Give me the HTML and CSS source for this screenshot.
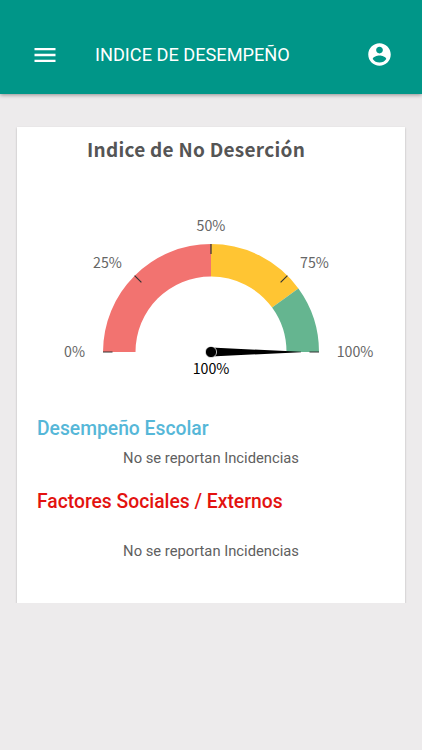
FILE: index.html
```
<!DOCTYPE html>
<html lang="es">
<head>
    <meta charset="UTF-8">
    <meta name="viewport" content="width=device-width, initial-scale=1.0">
    <title>Indice de Desempeño</title>
    <link rel="stylesheet" href="styles.css">
</head>
<body>

<header class="toolbar">
    <svg class="menu-icon" viewBox="0 0 24 24">
        <path d="M3 18h18v-2H3v2zm0-5h18v-2H3v2zm0-7v2h18V6H3z"/>
    </svg>
    <h1>INDICE DE DESEMPEÑO</h1>
    <svg class="user-icon" viewBox="0 0 24 24">
        <path d="M12 2C6.48 2 2 6.48 2 12s4.48 10 10 10 10-4.48 10-10S17.52 2 12 2zm0 3c1.66 0 3 1.34 3 3s-1.34 3-3 3-3-1.34-3-3 1.34-3 3-3zm0 14.2c-2.5 0-4.71-1.28-6-3.22.03-1.99 4-3.08 6-3.08 1.99 0 5.97 1.09 6 3.08-1.29 1.94-3.5 3.22-6 3.22z"/>
    </svg>
</header>

<main class="card">
    <svg class="gauge" viewBox="0 0 388 261">
        <text class="gauge-title" x="179" y="30">Indice de No Deserción</text>

        <!-- ranges: 0-50, 50-80, 80-100 -->
        <path class="low" d="M86 225A108 108 0 0 1 194 117V149.5A75.5 75.5 0 0 0 118.5 225z"/>
        <path class="medium" d="M194 117A108 108 0 0 1 281.4 161.5L255.1 180.6A75.5 75.5 0 0 0 194 149.5z"/>
        <path class="high" d="M281.4 161.5A108 108 0 0 1 302 225H269.5A75.5 75.5 0 0 0 255.1 180.6z"/>

        <path class="ticks" d="M86 225h9.5M117.6 148.6l6.8 6.8M194 117v10M270.4 148.6l-6.8 6.8M302 225h-9.5"/>

        <text class="label" x="57.5" y="230">0%</text>
        <text class="label" x="90.5" y="141">25%</text>
        <text class="label" x="194" y="104">50%</text>
        <text class="label" x="297.5" y="141">75%</text>
        <text class="label" x="338" y="230">100%</text>

        <path d="M194 220.5L284 224.8V225.2L194 229.5z"/>
        <circle class="pivot" cx="194" cy="225" r="5.6"/>
        <text class="value" x="194" y="247">100%</text>
    </svg>

    <section class="incidents">
        <h2 class="school">Desempeño Escolar</h2>
        <p>No se reportan Incidencias</p>
    </section>
    <section class="incidents external">
        <h2>Factores Sociales / Externos</h2>
        <p>No se reportan Incidencias</p>
    </section>
</main>

</body>
</html>
```
FILE: styles.css
```
body {
    margin: 0;
    font-family: Roboto, sans-serif;
    background-color: #edebec;
}
.toolbar {
    display: flex;
    align-items: center;
    box-sizing: border-box;
    height: 94px;
    padding: 15px 29px 0 31px;
    background-color: #009688;
    color: #fff;
    box-shadow: 0 1px 4px rgba(0, 0, 0, 0.4);
}
.toolbar svg {
    fill: #fff;
}
.toolbar h1 {
    flex: 1;
    margin: 0 0 0 36px;
    font-size: 18.2px;
    font-weight: 400;
    line-height: 24px;
}
.menu-icon {
    width: 28px;
    height: 28px;
}
.user-icon {
    width: 27px;
    height: 27px;
}
.card {
    box-sizing: border-box;
    height: 476px;
    margin: 33px 17px 0;
    background-color: #fff;
    box-shadow: 0 1px 2px rgba(0, 0, 0, 0.25);
}
.gauge {
    display: block;
    width: 388px;
    height: 261px;
    font-family: "Noto Sans CJK SC", sans-serif;
    text-anchor: middle;
}
.gauge-title {
    font-size: 19px;
    font-weight: 700;
    letter-spacing: 0.27px;
    fill: #555;
}
.low {
    fill: #f27370;
}
.medium {
    fill: #ffc533;
}
.high {
    fill: #65b590;
}
.ticks {
    stroke: #333;
    stroke-width: 1.2;
}
.label {
    font-size: 14.2px;
    fill: #666;
}
.pivot {
    stroke: #fff;
    stroke-width: 0.7;
}
.value {
    font-size: 14.2px;
    fill: #000;
}
.incidents {
    padding: 29px 20px 0;
}
.incidents h2 {
    margin: 0;
    font-size: 19.3px;
    font-weight: 500;
    line-height: 24px;
    color: #e3120f;
}
.incidents .school {
    color: #56b7d8;
}
.incidents p {
    margin: 7px 0 0;
    font-size: 14.75px;
    line-height: 20px;
    text-align: center;
    color: #606060;
}
.external {
    padding-top: 22px;
}
.external p {
    margin-top: 27px;
}
```
